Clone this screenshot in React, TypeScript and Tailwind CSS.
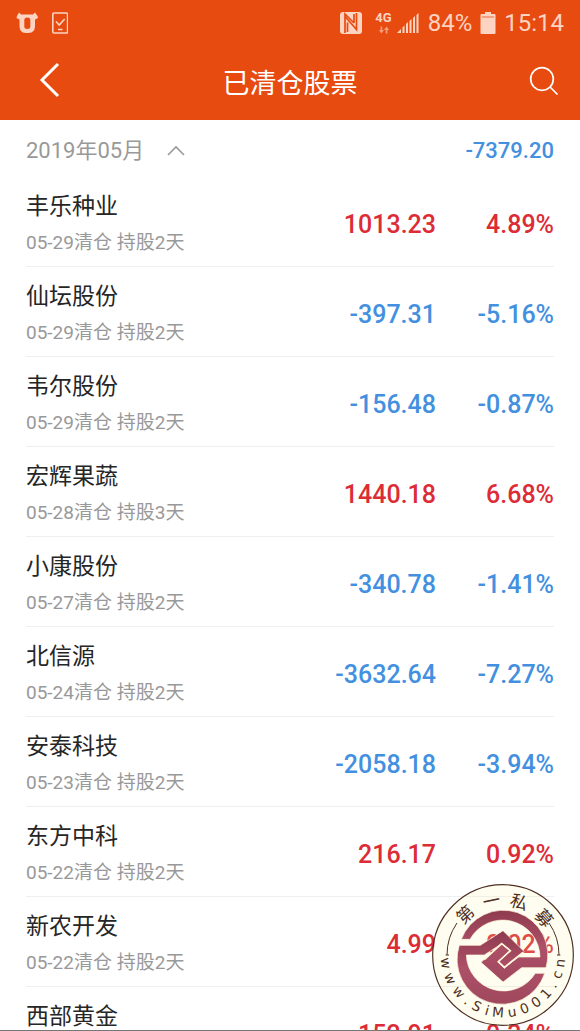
import React from "react";

type Position = {
  name: string;
  closed: string;
  days: number;
  profit: string;
  rate: string;
};

const positions: Position[] = [
  { name: "丰乐种业", closed: "05-29", days: 2, profit: "1013.23", rate: "4.89%" },
  { name: "仙坛股份", closed: "05-29", days: 2, profit: "-397.31", rate: "-5.16%" },
  { name: "韦尔股份", closed: "05-29", days: 2, profit: "-156.48", rate: "-0.87%" },
  { name: "宏辉果蔬", closed: "05-28", days: 3, profit: "1440.18", rate: "6.68%" },
  { name: "小康股份", closed: "05-27", days: 2, profit: "-340.78", rate: "-1.41%" },
  { name: "北信源", closed: "05-24", days: 2, profit: "-3632.64", rate: "-7.27%" },
  { name: "安泰科技", closed: "05-23", days: 2, profit: "-2058.18", rate: "-3.94%" },
  { name: "东方中科", closed: "05-22", days: 2, profit: "216.17", rate: "0.92%" },
  { name: "新农开发", closed: "05-22", days: 2, profit: "4.99", rate: "0.02%" },
  { name: "西部黄金", closed: "05-22", days: 2, profit: "152.91", rate: "0.34%" },
];

function StatusBar() {
  return (
    <div className="flex h-11 items-center justify-between px-4 pt-0.5 text-[#fdd3c2]">
      <div className="flex items-center gap-3">
        <svg className="h-6 w-6" viewBox="0 0 24 24" aria-hidden="true">
          <path
            d="M1 5L3 1.500 5 3.500H17L19 1.500 21.500 5 22 7 19 8.500V15Q19 22 12.500 22H9.500Q3.500 22 3.500 15V8.500L.500 7z"
            fill="currentColor"
          />
          <path d="M8.300 9Q8.300 6.500 11.300 6.500T14.300 9V15.500Q14.300 18 11.300 18T8.300 15.500z" fill="#e84b10" />
        </svg>
        <svg className="h-6 w-4" viewBox="0 0 16 24" fill="none" stroke="currentColor" strokeWidth="1.600" aria-hidden="true">
          <rect x="0.800" y="2" width="14.800" height="20" rx="1.200" />
          <path d="M4 10.500l3.200 3.500 5.500-6M6 18.500h4.500" />
        </svg>
      </div>
      <div className="flex items-center gap-2">
        <svg className="h-6 w-6" viewBox="0 0 24 24" aria-hidden="true">
          <rect x="1" y="1" width="22" height="22" rx="3" fill="currentColor" />
          <path
            d="M6 22V5.500L17.500 18.500V2M8.500 21V11.500M15 3v9M6 5.500V3L15 12"
            stroke="#e84b10"
            strokeWidth="1.700"
            fill="none"
          />
        </svg>
        <div className="flex flex-col items-center pl-1">
          <span className="text-[13px] font-bold leading-3">4G</span>
          <svg className="mt-0.5 h-2 w-3 opacity-60" viewBox="0 0 14 8" fill="currentColor" aria-hidden="true">
            <path d="M3 0h2v4h2L4 8 1 4h2zM9 8h2V4h2l-3-4-3 4h2z" />
          </svg>
        </div>
        <svg className="-ml-1 h-6 w-6" viewBox="0 0 24 24" fill="currentColor" aria-hidden="true">
          <path d="M1 22l4-4v4zM6.500 16.500l2-2V22h-2zM10 13l2-2v11h-2zM13.500 10l2-2v14h-2zM17 7l2-2v17h-2zM20.500 4l2-2v20h-2z" />
        </svg>
        <span className="text-[24px] leading-8">84%</span>
        <svg className="h-6 w-4" viewBox="0 0 16 24" aria-hidden="true">
          <path d="M5 1h6v2h3.500q1 0 1 1v18q0 1-1 1h-13q-1 0-1-1V4q0-1 1-1H5z" fill="currentColor" />
          <path d="M2 6h12" stroke="#e84b10" strokeOpacity=".5" strokeWidth="1.500" />
        </svg>
        <span className="text-[24px] leading-8">15:14</span>
      </div>
    </div>
  );
}

function Row({ item }: { item: Position }) {
  const tone = item.profit.startsWith("-") ? "text-[#4390e0]" : "text-[#dc2c36]";
  return (
    <li className="flex h-[90px] items-center border-b border-[#efefef] pt-1.5">
      <div className="flex-1">
        <h2 className="text-[23px] leading-8 text-[#262626]">{item.name}</h2>
        <p className="mt-1 text-[19px] leading-8 text-[#999999]">
          {item.closed}清仓 持股{item.days}天
        </p>
      </div>
      <span className={`text-[25px] font-medium ${tone}`}>{item.profit}</span>
      <span className={`w-[118px] text-right text-[25px] font-medium ${tone}`}>{item.rate}</span>
    </li>
  );
}

const sealUrl: [string, number][] = [
  ["w", 82], ["w", 66], ["w", 50], [".", 38], ["S", 27], ["i", 16], ["M", 5],
  ["u", -9], ["0", -22], ["0", -35], ["1", -48], [".", -59], ["c", -70], ["n", -82],
];

const sealName: [string, number][] = [["第", -43], ["一", -12], ["私", 17], ["募", 48]];

function Seal() {
  return (
    <svg
      className="pointer-events-none absolute bottom-1 right-1.5 h-[142px] w-[142px]"
      viewBox="-213 -213 426 426"
      role="img"
      aria-label="第一私募 www.SiMu001.cn"
    >
      <defs>
        <linearGradient id="seal" x1="0" y1="0" x2="0" y2="1">
          <stop offset="0" stopColor="#8e3b4e" />
          <stop offset=".5" stopColor="#ad5068" />
          <stop offset="1" stopColor="#a0485d" />
        </linearGradient>
      </defs>
      <circle r="211" fill="#fff39a" fillOpacity=".16" stroke="#4f2f22" strokeWidth="3.500" />
      <path d="M-168 0A168 168 0 0 1-138-96M138-96A168 168 0 0 1 168 0M-172 0h10M162 0h10" fill="none" stroke="#4f2f22" strokeWidth="3" />
      <g fill="url(#seal)" stroke="#fffbe0" strokeWidth="2">
        <path d="M-125-47A134 134 0 0 1 129 38H56L0 81-66 22-4-34 22-13-14 20 4 36 47 6H111A112 112 0 0 0-99-47Z" />
        <path d="M-131-29H-68L0-73 64-10 4 40-15 20 22-13-4-34-56 0H-110A112 112 0 0 0 97 55H125A134 134 0 1 1-131-29Z" />
      </g>
      <path d="M-56 14L-4-34 22-13-14 20 4 37 60-8" fill="none" stroke="#fff8dc" strokeWidth="5" />
      <g fill="#4f2f22" textAnchor="middle">
        {sealName.map(([char, angle]) => (
          <text key={char} y="-147" fontSize="52" transform={`rotate(${angle})`}>
            {char}
          </text>
        ))}
        {sealUrl.map(([char, angle], i) => (
          <text
            key={i}
            y="187"
            fontSize="41"
            className="font-['DejaVu_Sans',sans-serif]"
            transform={`rotate(${angle})`}
          >
            {char}
          </text>
        ))}
      </g>
    </svg>
  );
}

export default function App() {
  return (
    <div className="relative flex h-screen flex-col overflow-hidden border-b border-[#777777] bg-white font-['Roboto','Noto_Sans_CJK_SC',sans-serif]">
      <header className="shrink-0 bg-[#e84b10] pb-1">
        <StatusBar />
        <div className="grid h-[72px] grid-cols-[1fr_auto_1fr] items-center px-6.5 text-white">
          <button type="button" aria-label="返回" className="flex h-12 w-12 items-center justify-center">
            <svg className="h-9 w-6" viewBox="0 0 24 36" fill="none" stroke="currentColor" strokeWidth="3" aria-hidden="true">
              <path d="M20 2L4 18l16 16" />
            </svg>
          </button>
          <h1 className="pt-2 text-[27px] leading-10">已清仓股票</h1>
          <button type="button" aria-label="搜索" className="-mr-1.5 justify-self-end">
            <svg className="h-8 w-8" viewBox="0 0 32 32" fill="none" stroke="currentColor" strokeWidth="1.700" aria-hidden="true">
              <circle cx="14" cy="15" r="11.300" />
              <path d="M22 23l7.500 7.500" />
            </svg>
          </button>
        </div>
      </header>
      <main className="min-h-0 flex-1 overflow-y-auto px-6.5 [scrollbar-width:none]">
        <div className="flex h-[57px] items-center justify-between pt-1">
          <button type="button" aria-expanded="true" className="flex items-center gap-[22px] text-[22px] text-[#999999]">
            2019年05月
            <svg className="h-3 w-5" viewBox="0 0 20 12" fill="none" stroke="currentColor" strokeWidth="1.600" aria-hidden="true">
              <path d="M2 10l8-8 8 8" />
            </svg>
          </button>
          <span className="text-[22px] font-medium text-[#4390e0]">-7379.20</span>
        </div>
        <ul>
          {positions.map((item) => (
            <Row key={item.name} item={item} />
          ))}
        </ul>
      </main>
      <Seal />
    </div>
  );
}
